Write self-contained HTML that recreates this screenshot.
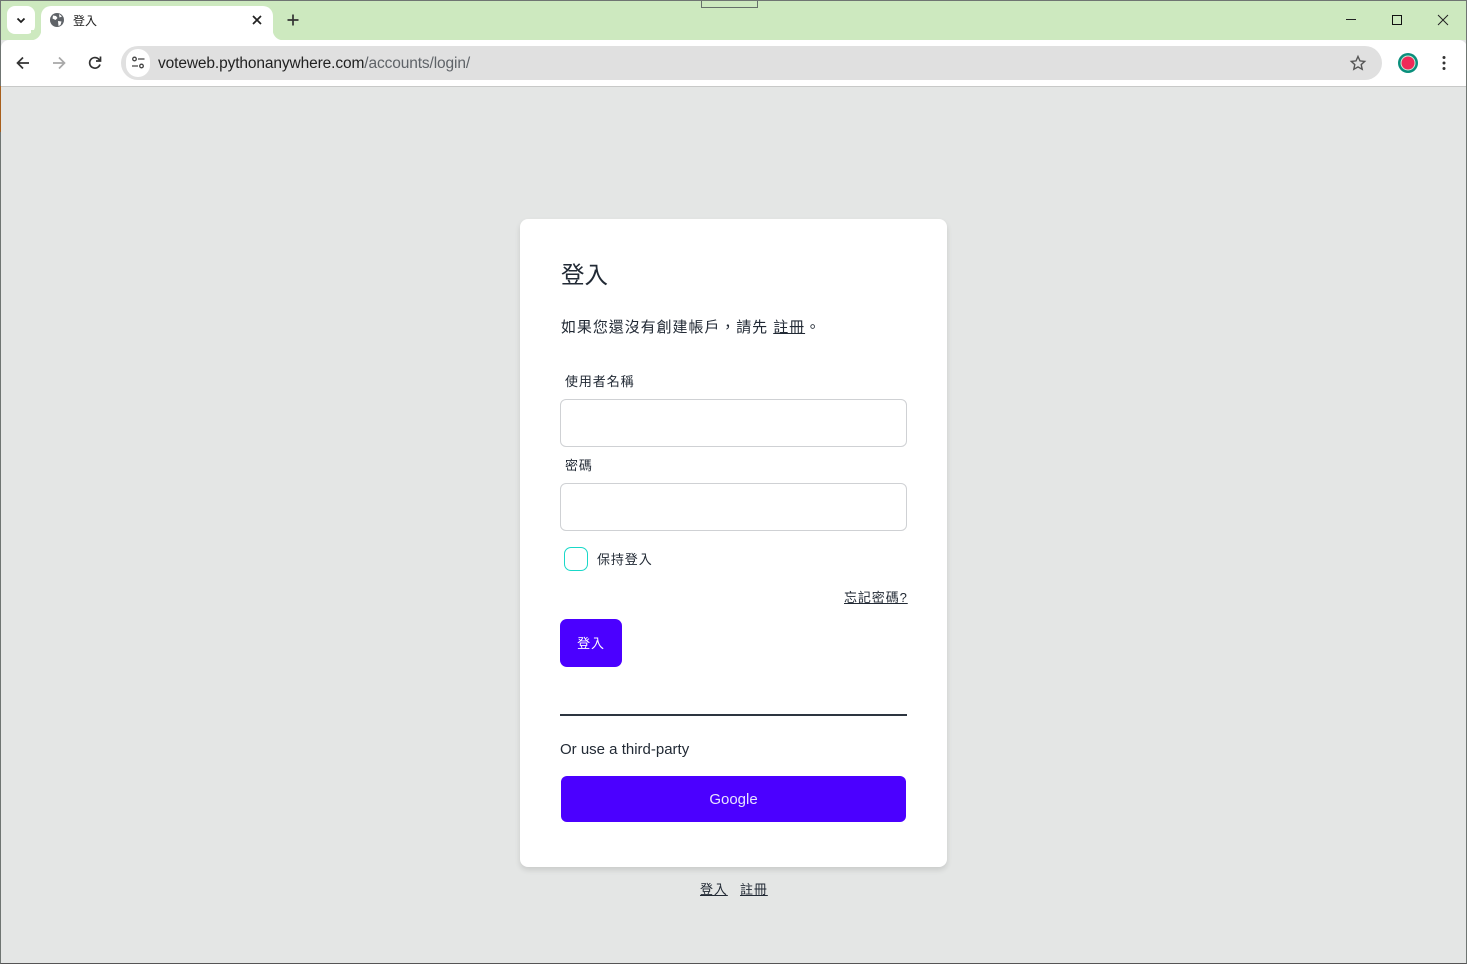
<!DOCTYPE html>
<html lang="zh-Hant"><head><meta charset="utf-8"><title>登入</title>
<style>
*{box-sizing:border-box}
html,body{margin:0;padding:0;width:1467px;height:964px;overflow:hidden;background:#e4e6e5;font-family:"Liberation Sans","Noto Sans CJK TC",sans-serif;color:#222a35}
.a{position:absolute;white-space:nowrap}
a{color:inherit;text-decoration:underline}
svg{position:absolute;overflow:visible}
</style></head><body>
<div class="a" style="left:0;top:0;width:1467px;height:964px;border:1px solid #6f7572;border-bottom-color:#555;z-index:5;pointer-events:none"></div>
<div class="a" style="left:0;top:0;width:1467px;height:40px;background:#cde9bf"></div>
<div class="a" style="left:701px;top:0;width:57px;height:8px;border:1px solid #66706a;border-top:0"></div>
<div class="a" style="left:7px;top:6px;width:28px;height:28px;background:#fff;border-radius:8px"></div>
<svg style="left:7px;top:6px" width="28" height="28" fill="none" stroke="#1f1f1f" stroke-width="1.8"><path d="M10.5 12.5l3.5 3.5 3.5-3.5"/></svg>
<div class="a" style="left:41px;top:6px;width:232px;height:34px;background:#fff;border-radius:10px 10px 0 0"></div>
<div class="a" style="left:1px;top:40px;width:1466px;height:46px;background:#fff;border-radius:8px 8px 0 0"></div>
<div class="a" style="left:31px;top:30px;width:10px;height:10px;background:radial-gradient(circle at 0 0,#cde9bf 10px,#fff 10.5px)"></div>
<div class="a" style="left:273px;top:30px;width:10px;height:10px;background:radial-gradient(circle at 100% 0,#cde9bf 10px,#fff 10.5px)"></div>
<svg style="left:50px;top:13px" width="14" height="14"><circle cx="7" cy="7" r="7" fill="#5f6368"/><path d="M3 2.500l3 .5 1.500 2-2 2-3-1.500zM8 8l3.500 .5-1 3.500-2 1zM9 1l3 2.500-2.500 1z" fill="#fff"/></svg>
<div class="a" style="left:73px;top:13px;font-size:12px;line-height:16px;color:#222">登入</div>
<svg style="left:252px;top:15px" width="10" height="10" stroke="#222" stroke-width="1.700" fill="none"><path d="M1 1l8 8M9 1l-8 8"/></svg>
<svg style="left:287px;top:14px" width="12" height="12" stroke="#333" stroke-width="1.700" fill="none"><path d="M6 0.500v11M0.500 6h11"/></svg>
<svg style="left:1346px;top:19px" width="11" height="2"><path d="M0 .5h10" stroke="#222" fill="none"/></svg>
<svg style="left:1392px;top:15px" width="10" height="10"><rect x=".5" y=".5" width="9" height="9" fill="none" stroke="#111"/></svg>
<svg style="left:1438px;top:15px" width="10" height="10" stroke="#222" fill="none"><path d="M0 0l10 10M10 0L0 10"/></svg>
<svg style="left:15px;top:55px" width="16" height="16" fill="none" stroke="#333" stroke-width="1.700"><path d="M14 8H3M8 2.500L2.500 8 8 13.500"/></svg>
<svg style="left:51px;top:55px" width="16" height="16" fill="none" stroke="#a8a8a8" stroke-width="1.700"><path d="M2 8h11M8 2.500L13.500 8 8 13.500"/></svg>
<svg style="left:87px;top:55px" width="16" height="16" fill="none" stroke="#333" stroke-width="1.700"><path d="M13 9.500A5.300 5.300 0 1 1 11.800 4.200L13.500 6M13.500 1.500V6H9"/></svg>
<div class="a" style="left:121px;top:46px;width:1261px;height:34px;border-radius:17px;background:#e0e0e0"></div>
<div class="a" style="left:126px;top:49px;width:24px;height:28px;border-radius:14px;background:#fff"></div>
<svg style="left:131px;top:56px" width="15" height="14" fill="none" stroke="#444" stroke-width="1.300"><circle cx="3.500" cy="3" r="1.800"/><circle cx="10.500" cy="10" r="1.800"/><path d="M7 3h6.500M1 10h6"/></svg>
<div class="a" style="left:158px;top:54px;font-size:15.500px;line-height:20px;letter-spacing:-.12px;color:#222"><span>voteweb.pythonanywhere.com</span><span style="color:#5f6368">/accounts/login/</span></div>
<svg style="left:1350px;top:55px" width="16" height="16" fill="none" stroke="#555" stroke-width="1.400"><path d="M8 1.500l2 4.400 4.700.5-3.500 3.200 1 4.700L8 11.900l-4.200 2.400 1-4.700L1.300 6.400 6 5.900z"/></svg>
<svg style="left:1398px;top:53px" width="20" height="20"><circle cx="10" cy="10" r="10" fill="#0a8f7c"/><circle cx="10" cy="10" r="7.500" fill="#ccebd8"/><circle cx="10" cy="10" r="6.500" fill="#ee2a58"/></svg>
<svg style="left:1441px;top:56px" width="6" height="14" fill="#333"><circle cx="3" cy="1.500" r="1.500"/><circle cx="3" cy="7" r="1.500"/><circle cx="3" cy="12.500" r="1.500"/></svg>
<div class="a" style="left:1px;top:86px;width:1466px;height:1px;background:#c8c9c8"></div>
<div class="a" style="left:0;top:86px;width:1px;height:46px;background:#a85f1c;z-index:6"></div>

<div class="a" style="left:520px;top:219px;width:427px;height:648px;background:#fff;border-radius:8px;box-shadow:0 3px 6px rgba(0,0,0,.12)"></div>
<div class="a" style="left:561px;top:259px;font-size:23.500px;line-height:32px">登入</div>
<div class="a" style="left:561px;top:317px;font-size:15px;line-height:22px;letter-spacing:.93px">如果您還沒有創建帳戶，請先 <a href="#">註冊</a>。</div>
<div class="a" style="left:565px;top:373px;font-size:13px;line-height:18px;letter-spacing:.9px">使用者名稱</div>
<div class="a" style="left:560px;top:399px;width:347px;height:48px;border:1px solid #cfd1d4;border-radius:6px;background:#fff"></div>
<div class="a" style="left:565px;top:457px;font-size:13px;line-height:18px;letter-spacing:.9px">密碼</div>
<div class="a" style="left:560px;top:483px;width:347px;height:48px;border:1px solid #cfd1d4;border-radius:6px;background:#fff"></div>
<div class="a" style="left:564px;top:547px;width:24px;height:24px;border:1px solid #19d8c8;border-radius:7px;background:#fff"></div>
<div class="a" style="left:597px;top:551px;font-size:13px;line-height:18px;letter-spacing:.9px">保持登入</div>
<div class="a" style="left:844px;top:589px;font-size:13px;line-height:18px;letter-spacing:.9px"><a href="#">忘記密碼?</a></div>
<div class="a" style="left:560px;top:619px;width:62px;height:48px;border-radius:7px;background:#4b00ff;color:#fff;font-size:13px;line-height:50px;text-align:center;letter-spacing:.9px">登入</div>
<div class="a" style="left:560px;top:714px;width:347px;height:2px;background:#2d3540"></div>
<div class="a" style="left:560px;top:740px;font-size:15px;line-height:20px">Or use a third-party</div>
<div class="a" style="left:561px;top:776px;width:345px;height:46px;border-radius:6px;background:#4b00ff;color:#e8e4ff;font-size:15px;line-height:48px;text-align:center">Google</div>
<div class="a" style="left:700px;top:881px;font-size:13px;line-height:18px;letter-spacing:.9px"><a href="#">登入</a></div>
<div class="a" style="left:740px;top:881px;font-size:13px;line-height:18px;letter-spacing:.9px"><a href="#">註冊</a></div>
</body></html>
